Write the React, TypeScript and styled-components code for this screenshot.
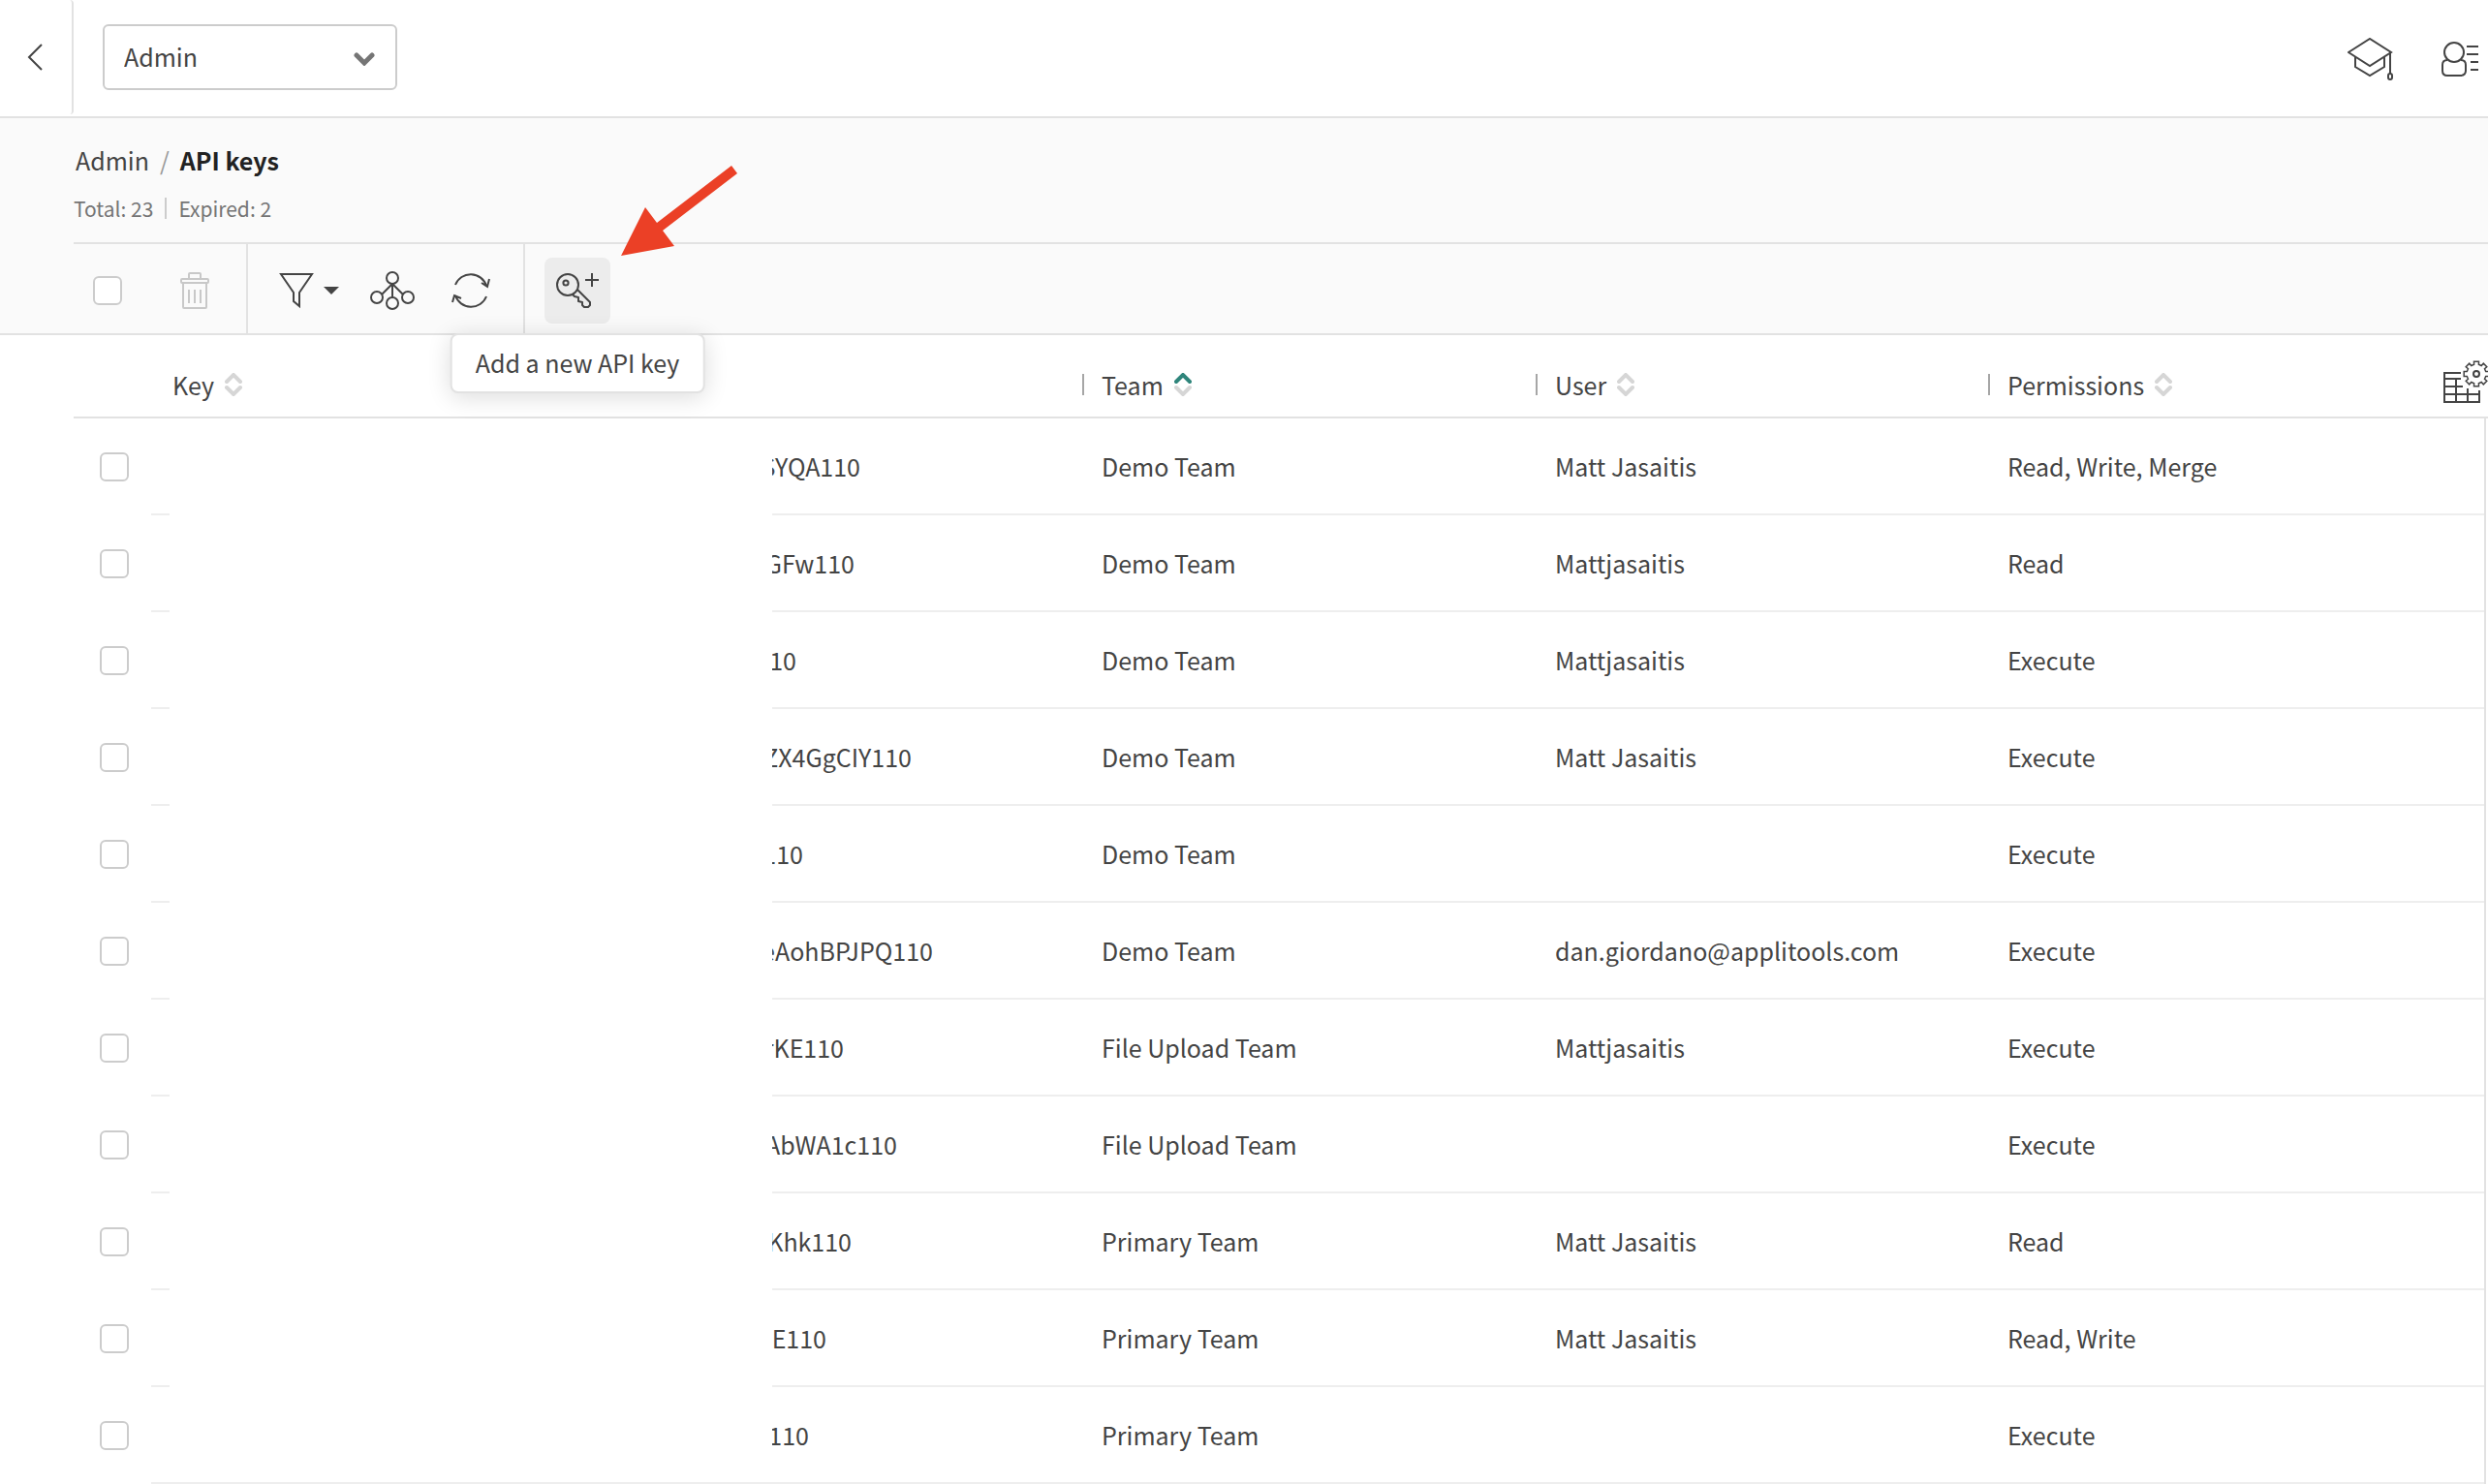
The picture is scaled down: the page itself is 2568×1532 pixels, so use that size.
import React from "react";
import styled, { createGlobalStyle } from "styled-components";

const ink = "#444444";
const muted = "#757575";
const rule = "#e2e2e2";
const rowRule = "#eeeeee";
const outline = "#cccccc";
const accent = "#2f857b";

const GlobalStyle = createGlobalStyle`
  *, *::before, *::after { box-sizing: border-box; }
  body {
    margin: 0;
    overflow: hidden;
    background: #fff;
    color: ${ink};
    font-family: "Noto Sans CJK SC", "Noto Sans", sans-serif;
    font-size: 25px;
    line-height: 36px;
  }
  button, select { font: inherit; color: inherit; }
`;

const TopBar = styled.header`
  display: flex;
  align-items: center;
  height: 122px;
  padding: 0 10px 2px 0;
  border-bottom: 2px solid ${rule};
`;

const BackButton = styled.button`
  display: flex;
  align-items: center;
  align-self: flex-start;
  width: 76px;
  height: 118px;
  padding: 0 0 0 28px;
  border: 0;
  border-right: 2px solid ${rule};
  border-radius: 4px;
  background: none;
`;

const Picker = styled.label`
  display: grid;
  align-items: center;
  width: 304px;
  margin-left: 30px;

  > * { grid-area: 1 / 1; }
  > svg { justify-self: end; margin: 4px 23px 0 0; pointer-events: none; }
`;

const PickerSelect = styled.select`
  appearance: none;
  width: 100%;
  height: 68px;
  padding: 0 60px 2px 20px;
  border: 2px solid ${outline};
  border-radius: 6px;
  background: #fff;
`;

const TopActions = styled.nav`
  display: flex;
  align-items: center;
  gap: 49px;
  margin-left: auto;
  padding-top: 4px;
`;

const IconButton = styled.button`
  display: flex;
  align-items: center;
  gap: 10px;
  padding: 0;
  border: 0;
  background: none;
`;

const PageHead = styled.section`
  padding-left: 76px;
  background: #fafafa;
  border-bottom: 2px solid ${rule};
`;

const Crumbs = styled.nav`
  display: flex;
  gap: 11px;
  padding: 25px 0 0 2px;

  a { color: inherit; text-decoration: none; }
  h1 { margin: 0; font-size: inherit; font-weight: 700; color: #222; }
`;

const Slash = styled.span`
  color: #999;
`;

const Counts = styled.div`
  display: flex;
  align-items: center;
  gap: 12px;
  margin-top: 17px;
  padding-bottom: 20px;
  color: ${muted};
  font-size: 21px;
  line-height: 30px;
`;

const Tick = styled.span<{ $color: string }>`
  width: 2px;
  height: 22px;
  background: ${(p) => p.$color};
`;

const Toolbar = styled.div`
  display: flex;
  height: 94px;
  border-top: 2px solid ${rule};
`;

const ToolGroup = styled.div<{ $gap: number; $left: number; $right: number }>`
  display: flex;
  align-items: center;
  gap: ${(p) => p.$gap}px;
  padding: 4px ${(p) => p.$right}px 0 ${(p) => p.$left}px;

  & + & { border-left: 2px solid ${rule}; }
`;

const Checkbox = styled.input`
  appearance: none;
  display: block;
  width: 30px;
  height: 30px;
  margin: 0;
  border: 2px solid ${outline};
  border-radius: 6px;
  background: #fff;

  &:checked { background: ${accent}; }
`;

const AddKey = styled.div`
  position: relative;
`;

const AddKeyButton = styled.button`
  display: flex;
  align-items: center;
  width: 68px;
  height: 68px;
  padding: 0 0 0 12px;
  border: 0;
  border-radius: 8px;
  background: #ececec;
`;

const Tooltip = styled.div`
  position: absolute;
  top: 78px;
  left: 50%;
  transform: translateX(-50%);
  z-index: 2;
  padding: 10px 24px 12px;
  border: 2px solid ${rule};
  border-radius: 8px;
  background: #fff;
  box-shadow: 0 4px 24px rgba(0, 0, 0, 0.14);
  white-space: nowrap;
`;

const Pointer = styled.svg`
  position: absolute;
  left: 78px;
  top: -96px;
`;

const KeyTable = styled.table`
  width: calc(100% - 76px);
  margin-left: 76px;
  border-collapse: separate;
  border-spacing: 0;
  table-layout: fixed;

  th, td { padding: 0; text-align: left; font-weight: 400; }
  thead th { height: 86px; border-bottom: 2px solid ${rule}; }
`;

const Column = styled.col<{ $width?: number }>`
  width: ${(p) => (p.$width ? `${p.$width}px` : "auto")};
`;

const HeadCell = styled.div<{ $inset: number }>`
  display: flex;
  align-items: center;
  height: 84px;
  padding: 18px 0 0 ${(p) => p.$inset}px;
`;

const SortButton = styled.button`
  display: flex;
  align-items: center;
  gap: 11px;
  padding: 0;
  border: 0;
  background: none;

  ${Tick} + & { margin-left: 18px; }
`;

const ColumnsButton = styled(IconButton)`
  margin: 0 0 6px auto;
`;

const SelectCell = styled.td`
  > input { margin-left: 27px; }
`;

const TextCell = styled.td`
  height: 100px;
  border-bottom: 2px solid ${rowRule};

  > div { padding-left: 20px; }
`;

const EdgeCell = styled.td`
  border-left: 2px solid ${rule};
`;

const KeyCell = styled.div`
  display: flex;
  height: 100px;
`;

const KeyPart = styled.div<{ $width?: number; $ruled?: boolean }>`
  display: flex;
  align-items: center;
  flex: ${(p) => (p.$width ? `0 0 ${p.$width}px` : "1")};
  border-bottom: 2px solid ${(p) => (p.$ruled ? rowRule : "transparent")};
`;

const KeyTail = styled.code`
  display: flex;
  justify-content: flex-end;
  overflow: hidden;
  font-family: inherit;
`;

type IconProps = { w: number; h: number; color?: string; sw?: number; children: React.ReactNode };

const Icon = ({ w, h, color = ink, sw = 2, children }: IconProps) => (
  <svg width={w} height={h} viewBox={`0 0 ${w} ${h}`} fill="none" stroke={color} strokeWidth={sw} aria-hidden="true">
    {children}
  </svg>
);

const gearPath = (cx: number, cy: number, outer: number, inner: number, teeth: number) => {
  const points: string[] = [];
  const add = (r: number, a: number) => points.push(`${(cx + r * Math.cos(a)).toFixed(1)} ${(cy + r * Math.sin(a)).toFixed(1)}`);
  for (let i = 0; i < teeth; i++) {
    const mid = (i / teeth) * Math.PI * 2;
    add(inner, mid - 0.24);
    add(outer, mid - 0.19);
    add(outer, mid + 0.19);
    add(inner, mid + 0.24);
  }
  return `M${points.join("L")}Z`;
};

const SortIcon = ({ ascending }: { ascending?: boolean }) => (
  <Icon w={18} h={24} color="#d6d6d6" sw={4}>
    <g strokeLinecap="round">
      <path d="M2 9L9 2L16 9" stroke={ascending ? accent : undefined} />
      <path d="M2 15L9 22L16 15" />
    </g>
  </Icon>
);

const columns = ["Team", "User", "Permissions"];

const rows = [
  { tail: "SYQA110", shown: 91, team: "Demo Team", user: "Matt Jasaitis", permissions: "Read, Write, Merge" },
  { tail: "GFw110", shown: 85, team: "Demo Team", user: "Mattjasaitis", permissions: "Read" },
  { tail: "110", shown: 25, team: "Demo Team", user: "Mattjasaitis", permissions: "Execute" },
  { tail: "ZX4GgCIY110", shown: 144, team: "Demo Team", user: "Matt Jasaitis", permissions: "Execute" },
  { tail: "110", shown: 32, team: "Demo Team", user: "", permissions: "Execute" },
  { tail: "eAohBPJPQ110", shown: 166, team: "Demo Team", user: "dan.giordano@applitools.com", permissions: "Execute" },
  { tail: "rKE110", shown: 74, team: "File Upload Team", user: "Mattjasaitis", permissions: "Execute" },
  { tail: "AbWA1c110", shown: 129, team: "File Upload Team", user: "", permissions: "Execute" },
  { tail: "Khk110", shown: 82, team: "Primary Team", user: "Matt Jasaitis", permissions: "Read" },
  { tail: "E110", shown: 56, team: "Primary Team", user: "Matt Jasaitis", permissions: "Read, Write" },
  { tail: "110", shown: 38, team: "Primary Team", user: "", permissions: "Execute" },
];

export default function App() {
  return (
    <>
      <GlobalStyle />
      <TopBar>
        <BackButton aria-label="Back">
          <Icon w={16} h={30}>
            <path d="M15 2L2 15L15 28" />
          </Icon>
        </BackButton>
        <Picker>
          <PickerSelect aria-label="Section" defaultValue="Admin">
            <option>Admin</option>
          </PickerSelect>
          <Icon w={22} h={14} color={muted} sw={5}>
            <path d="M3 3L11 11L19 3" strokeLinecap="round" />
          </Icon>
        </Picker>
        <TopActions aria-label="Account">
          <IconButton aria-label="Learning">
            <Icon w={48} h={44}>
              <path d="M1 15L23 1L45 15L23 29ZM8 19V30L23 39L38 30V19M44 15V37" />
              <rect x="42" y="37" width="4" height="6" rx="2" />
            </Icon>
          </IconButton>
          <IconButton aria-label="Profile">
            <Icon w={38} h={36}>
              <circle cx="13" cy="11" r="10" />
              <path d="M6 19C3 19 1 21 1 24V30C1 33 3 35 6 35H19C23 35 25 33 25 30V24C25 21 23 19 20 19M26 5H38M26 13H38M30 21H38M30 29H38" />
            </Icon>
          </IconButton>
        </TopActions>
      </TopBar>

      <PageHead>
        <Crumbs aria-label="Breadcrumb">
          <a href="#admin">Admin</a>
          <Slash>/</Slash>
          <h1>API keys</h1>
        </Crumbs>
        <Counts>
          <span>Total: 23</span>
          <Tick $color={outline} />
          <span>Expired: 2</span>
        </Counts>
        <Toolbar role="toolbar" aria-label="API key actions">
          <ToolGroup $gap={60} $left={20} $right={38}>
            <Checkbox type="checkbox" aria-label="Select all keys" />
            <IconButton aria-label="Delete" disabled>
              <Icon w={30} h={38} color="#c8c8c8">
                <path d="M9 7V2Q9 1 10 1H20Q21 1 21 2V7M3 11V36Q3 37 4 37H26Q27 37 27 36V11M9 18V32M15 18V32M21 18V32" />
                <rect x="1" y="7" width="28" height="4" rx="1" />
              </Icon>
            </IconButton>
          </ToolGroup>
          <ToolGroup $gap={32} $left={32} $right={34}>
            <IconButton aria-label="Filter">
              <Icon w={36} h={38}>
                <path d="M2 2H34L21 21V35L15 30V21Z" />
              </Icon>
              <Icon w={16} h={8}>
                <path d="M0 0H16L8 8Z" fill={ink} stroke="none" />
              </Icon>
            </IconButton>
            <IconButton aria-label="Group">
              <Icon w={46} h={40}>
                <circle cx="23" cy="7" r="6" />
                <circle cx="7" cy="27" r="6" />
                <circle cx="39" cy="27" r="6" />
                <circle cx="23" cy="33" r="6" />
                <path d="M23 13V27M23 13L12 24M23 13L34 24" />
              </Icon>
            </IconButton>
            <IconButton aria-label="Refresh">
              <Icon w={46} h={38}>
                <path d="M10 13A17 17 0 0 1 42 14M37 11L43 15L45 7M42 25A17 17 0 0 1 10 24M16 27L9 24L7 31" />
              </Icon>
            </IconButton>
          </ToolGroup>
          <ToolGroup $gap={0} $left={20} $right={20}>
            <AddKey>
              <AddKeyButton aria-label="Add a new API key" aria-describedby="add-key-tip">
                <Icon w={46} h={38}>
                  <circle cx="12" cy="13" r="11" />
                  <circle cx="10" cy="11" r="2.6" />
                  <path d="M37 1V15M30 8H44M22 18L35 31V34L33 36H29L27 34V31L23 30V26L19 25L17 23" strokeLinejoin="round" />
                </Icon>
              </AddKeyButton>
              <Tooltip id="add-key-tip" role="tooltip">Add a new API key</Tooltip>
              <Pointer width="122" height="96" viewBox="0 0 122 96" aria-hidden="true">
                <path d="M1 94L26 44L38 60L115 1L121 9L44 68L56 84Z" fill="#eb4026" />
              </Pointer>
            </AddKey>
          </ToolGroup>
        </Toolbar>
      </PageHead>

      <KeyTable>
        <colgroup>
          <Column $width={80} />
          <Column />
          <Column $width={468} />
          <Column $width={467} />
          <Column $width={512} />
          <Column $width={4} />
        </colgroup>
        <thead>
          <tr>
            <th aria-label="Selected" />
            <th scope="col">
              <HeadCell $inset={22}>
                <SortButton>
                  Key <SortIcon />
                </SortButton>
              </HeadCell>
            </th>
            {columns.map((name) => (
              <th key={name} scope="col" colSpan={name === "Permissions" ? 2 : 1} aria-sort={name === "Team" ? "ascending" : undefined}>
                <HeadCell $inset={0}>
                  <Tick $color="#a6a6a6" />
                  <SortButton>
                    {name} <SortIcon ascending={name === "Team"} />
                  </SortButton>
                  {name === "Permissions" && (
                    <ColumnsButton aria-label="Choose columns">
                      <Icon w={46} h={44}>
                        <path d="M18 13H1V43H37V31M1 19H18M1 27H20M1 35H37M13 19V43M25 29V43" />
                        <path d={gearPath(34, 14, 13, 10, 8)} strokeWidth="1.5" />
                        <circle cx="34" cy="14" r="3" />
                      </Icon>
                    </ColumnsButton>
                  )}
                </HeadCell>
              </th>
            ))}
          </tr>
        </thead>
        <tbody>
          {rows.map((row, i) => (
            <tr key={i}>
              <SelectCell>
                <Checkbox type="checkbox" aria-label={`Select key ${i + 1}`} />
              </SelectCell>
              <td>
                <KeyCell>
                  <KeyPart $width={19} $ruled />
                  <KeyPart $width={622} $ruled={i === rows.length - 1} />
                  <KeyPart $ruled>
                    <KeyTail style={{ width: row.shown }}>{row.tail}</KeyTail>
                  </KeyPart>
                </KeyCell>
              </td>
              <TextCell><div>{row.team}</div></TextCell>
              <TextCell><div>{row.user}</div></TextCell>
              <TextCell><div>{row.permissions}</div></TextCell>
              <EdgeCell />
            </tr>
          ))}
        </tbody>
      </KeyTable>
    </>
  );
}
